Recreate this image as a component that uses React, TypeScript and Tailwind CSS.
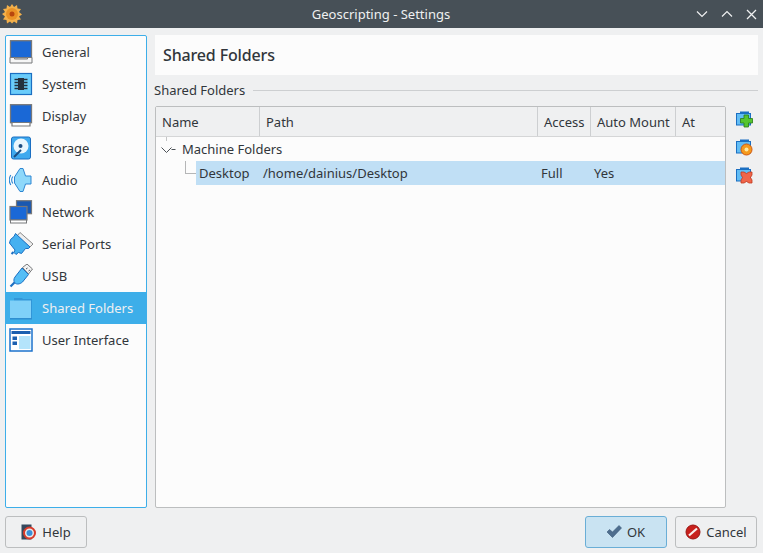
import type { ReactNode } from "react";

const GeneralIcon = () => (
  <svg width="24" height="24" viewBox="0 0 24 24">
    <rect x="1.5" y="0.7" width="21" height="17" fill="#1a68d6" stroke="#77787a" strokeWidth="1.3" />
    <path d="M1 17.5v5.500h22v-5.500h-4.500v1.500h-13v-1.500z" fill="#f6f6f6" stroke="#77787a" strokeWidth="1" />
  </svg>
);

const SystemIcon = () => (
  <svg width="24" height="24" viewBox="0 0 24 24">
    <rect x="1.5" y="1.5" width="21" height="21" fill="#6accfa" stroke="#1b6fc2" strokeWidth="1.2" />
    <rect x="9" y="6" width="6" height="12" fill="#24303c" />
    <path d="M5.500 7.500H9M5.500 10.500H9M5.500 13.500H9M5.500 16.500H9M15 7.500h3.500M15 10.500h3.500M15 13.500h3.500M15 16.500h3.500" stroke="#24303c" strokeWidth="1.4" />
  </svg>
);

const DisplayIcon = () => (
  <svg width="24" height="24" viewBox="0 0 24 24">
    <rect x="1.5" y="0.7" width="21" height="18" fill="#1a68d6" stroke="#77787a" strokeWidth="1.3" />
    <path d="M3 19v3h18v-3" fill="#fff" stroke="#77787a" strokeWidth="1.2" />
  </svg>
);

const StorageIcon = () => (
  <svg width="24" height="24" viewBox="0 0 24 24">
    <rect x="2.5" y="1" width="19" height="22" rx="2" fill="#3fa9ee" stroke="#1b6fc2" />
    <circle cx="12" cy="10" r="7.5" fill="#e9f6fd" />
    <circle cx="11.5" cy="10" r="2" fill="#1d4d82" />
    <path d="M5 21l7-7" stroke="#1d4d82" strokeWidth="2" />
  </svg>
);

const AudioIcon = () => (
  <svg width="24" height="24" viewBox="0 0 24 24">
    <path d="M5.500 9L11 0.500h3L16.500 8h5.500v8h-5.500L14 23.500h-3L5.500 15z" fill="#8ed8fa" stroke="#2e86d2" strokeWidth="1" />
    <path d="M3.800 8.500c-1.500 2.300-1.500 4.700 0 7M1.800 7c-2 3.300-2 6.700 0 10" fill="none" stroke="#2e86d2" strokeWidth="1.1" />
  </svg>
);

const NetworkIcon = () => (
  <svg width="24" height="24" viewBox="0 0 24 24">
    <rect x="7.500" y="0.700" width="15" height="13" fill="#1a58b0" stroke="#77787a" strokeWidth="1.2" />
    <rect x="1" y="6.500" width="17" height="13.500" fill="#1a68d6" stroke="#77787a" strokeWidth="1.2" />
    <rect x="1.500" y="20" width="16" height="3" fill="#fff" stroke="#77787a" />
  </svg>
);

const SerialIcon = () => (
  <svg width="24" height="24" viewBox="0 0 24 24">
    <path d="M11 0.500l13 11.500-3.500 3.500L8 4z" fill="#eeeeee" stroke="#8a8a8a" />
    <path d="M6.500 1.500L21 15l-1.500 1.500-3 0-4 5-3-1-2.500 2-2-2 1-2.500L0.500 11l1-3.500 3.500-3z" fill="#45b0f0" stroke="#1b6fc2" />
    <path d="M2.500 22l2-2" stroke="#1b6fc2" strokeWidth="2" />
  </svg>
);

const UsbIcon = () => (
  <svg width="24" height="24" viewBox="0 0 24 24">
    <path d="M13.500 3.500L18 0l5.500 5-4 5z" fill="#f2f2f2" stroke="#77787a" />
    <path d="M17 5l1.500-1M19.500 7l1.500-1" stroke="#55595d" strokeWidth="1" />
    <path d="M13 4l6.500 6.500-6 7.500c-3 2.500-6 2.500-7.500 1s-1.500-4 0-6z" fill="#55bef6" stroke="#1b6fc2" />
    <path d="M5.500 18.500L1.500 22.500" stroke="#1b6fc2" strokeWidth="2.2" />
  </svg>
);

const FolderIcon = () => (
  <svg width="24" height="24" viewBox="0 0 24 24">
    <path d="M5 2h8l1 1h9v20H5z" fill="#3296d8" />
    <rect x="1" y="4.500" width="21" height="18" fill="#7fd0f8" />
    <rect x="1" y="22" width="22" height="1.500" fill="#2f8ed0" />
  </svg>
);

const InterfaceIcon = () => (
  <svg width="24" height="24" viewBox="0 0 24 24">
    <rect x="1" y="1" width="22" height="22" fill="#ffffff" stroke="#1b72cc" strokeWidth="1.5" />
    <rect x="2.500" y="3" width="19" height="3" fill="#1b5fb0" />
    <rect x="10" y="8" width="11.500" height="13" fill="#b4e4fb" />
    <rect x="3.500" y="8.500" width="4.500" height="3.500" fill="#1b5fb0" />
    <rect x="3.500" y="13.500" width="4.500" height="3.500" fill="#1b5fb0" />
  </svg>
);

// folder with a small badge at the lower right, shared by the three side actions
const FolderAction = ({ children }: { children: ReactNode }) => (
  <svg width="17" height="17" viewBox="0 0 17 17">
    <path d="M4 0.500h9v3H4z" fill="#1b6fc2" />
    <rect x="0.500" y="2.500" width="14" height="11.500" fill="#62bdf4" stroke="#1b6fc2" />
    {children}
  </svg>
);

const sections = [
  { label: "General", icon: <GeneralIcon /> },
  { label: "System", icon: <SystemIcon /> },
  { label: "Display", icon: <DisplayIcon /> },
  { label: "Storage", icon: <StorageIcon /> },
  { label: "Audio", icon: <AudioIcon /> },
  { label: "Network", icon: <NetworkIcon /> },
  { label: "Serial Ports", icon: <SerialIcon /> },
  { label: "USB", icon: <UsbIcon /> },
  { label: "Shared Folders", icon: <FolderIcon />, active: true },
  { label: "User Interface", icon: <InterfaceIcon /> },
];

const columns = [
  { label: "Name", width: "w-[104px]" },
  { label: "Path", width: "w-[278px]" },
  { label: "Access", width: "w-[53px]" },
  { label: "Auto Mount", width: "w-[85px]" },
  { label: "At", width: "flex-1" },
];

export default function App() {
  return (
    <div className="flex h-[553px] w-[763px] flex-col overflow-hidden bg-[#eff0f1] text-[13px] text-[#31363b] [font-family:'Noto_Sans',sans-serif]">
      <header className="flex h-[28px] shrink-0 items-center bg-[#475057] pl-[2px] pr-[5px] text-[#eff0f1]">
        <svg width="20" height="20" viewBox="0 0 20 20">
          <path d="M10 0l2 3 3-2 .5 3.500 3.500.5-2 3 3 2.500-3 2 2 3-3.500.5-.5 3.500-3-2-2 2-2-2-3 2-.5-3.500L1 15.500l2-3-3-2.500 3-2-2-3 3.500-.5L5 1l3 2z" fill="#f4b04a" />
          <circle cx="10" cy="10" r="6" fill="#ea9226" />
          <circle cx="10" cy="10" r="2.500" fill="#b8460e" />
        </svg>
        <div className="flex-1 pl-[44px] pt-[2px] text-center">Geoscripting - Settings</div>
        <div className="flex items-center gap-[13px] pr-[1px]">
          <svg width="12" height="12" viewBox="0 0 12 12" fill="none" stroke="#eff0f1" strokeWidth="1.2"><path d="M1 3.500l5 5 5-5" /></svg>
          <svg width="12" height="12" viewBox="0 0 12 12" fill="none" stroke="#eff0f1" strokeWidth="1.2"><path d="M1 8.500l5-5 5 5" /></svg>
          <svg width="11" height="11" viewBox="0 0 11 11" fill="none" stroke="#eff0f1" strokeWidth="1.3"><path d="M1 1l9 9M10 1l-9 9" /></svg>
        </div>
      </header>

      <main className="flex min-h-0 flex-1 gap-[8px] px-[5px] pt-[7px]">
        <nav className="w-[142px] shrink-0 rounded-[2px] border border-[#3daee9] bg-[#fcfcfc]">
          {sections.map((s) => (
            <div key={s.label} className={`flex h-[32px] items-center gap-[9px] pl-[3px] ${s.active ? "bg-[#3daee9] text-[#eff0f1]" : ""}`}>
              <span className="flex h-[24px] w-[24px] items-center justify-center">{s.icon}</span>
              <span className="pt-[2px]">{s.label}</span>
            </div>
          ))}
        </nav>

        <section className="flex min-w-0 flex-1 flex-col">
          <h1 className="flex h-[40px] shrink-0 items-center bg-[#fcfcfc] pl-[8px] text-[16px] font-medium tracking-[-0.15px]">Shared Folders</h1>
          <div className="mt-[6px] flex h-[18px] shrink-0 items-center gap-[8px]">
            <span className="-ml-[1px] pt-[2px]">Shared Folders</span>
            <div className="h-px flex-1 bg-[#cdcfd1]" />
          </div>
          <div className="mt-[7px] flex min-h-0 flex-1 gap-[10px]">
            <div className="flex w-[571px] flex-col rounded-[2px] border border-[#bcbebf] bg-[#fcfcfc]">
              <div className="flex h-[30px] shrink-0 border-b border-[#d5d6d7] bg-[#eff0f1]">
                {columns.map((c, i) => (
                  <div key={c.label} className={`flex items-center pl-[6px] pt-[2px] ${c.width} ${i < columns.length - 1 ? "border-r border-[#cdcfd1]" : ""}`}>
                    {c.label}
                  </div>
                ))}
              </div>
              <div className="relative flex h-[24px] items-center pl-[26px] pt-[2px]">
                <span className="absolute left-[5px] top-[9px]">
                  <svg width="15" height="8" viewBox="0 0 15 8" fill="none" stroke="#4d5257" strokeWidth="1"><path d="M0.500 1.500l5 5 5-5M10.500 3.500h4" /></svg>
                </span>
                <span className="absolute left-[10px] top-0 h-[4px] w-px bg-[#c4c5c6]" />
                Machine Folders
              </div>
              <div className="relative flex h-[24px] items-center pl-[40px]">
                <span className="absolute left-[29px] top-0 h-[13px] w-[11px] border-b border-l border-[#b5b6b7]" />
                <div className="flex h-full flex-1 items-center bg-[#c0dff5] pl-[3px] pt-[2px]">
                  <span className="w-[64px]">Desktop</span>
                  <span className="w-[278px]">/home/dainius/Desktop</span>
                  <span className="w-[53px]">Full</span>
                  <span>Yes</span>
                </div>
              </div>
            </div>
            <div className="flex w-[17px] flex-col gap-[11px] pt-[5px]">
              <FolderAction>
                <path d="M8 4h4.500v3.500h4v4.500h-4v4h-4.500v-4h-3.500v-4.500h3.500z" fill="#55c52f" stroke="#2a7a18" strokeWidth="0.8" />
              </FolderAction>
              <FolderAction>
                <circle cx="10.500" cy="10.500" r="5.500" fill="#f59a1d" stroke="#d2570f" strokeWidth="1" />
                <circle cx="10.500" cy="10.500" r="2" fill="#ffe9a0" />
              </FolderAction>
              <FolderAction>
                <path d="M5 5l3 0 2.500 1.500L13 5l3 0 0 3-1.500 2.500L16 13l0 3-3 0-2.500-1.500L8 16l-3 0 0-3 1.500-2.500L5 8z" fill="#f0654a" stroke="#c03a20" strokeWidth="0.8" />
              </FolderAction>
            </div>
          </div>
        </section>
      </main>

      <footer className="flex h-[45px] shrink-0 items-start justify-between pl-[5px] pr-[6px] pt-[8px]">
        <button type="button" className="flex h-[32px] w-[82px] items-center justify-center gap-[5px] rounded-[3px] border border-[#bcbebf] bg-[#eff0f1]">
          <svg width="16" height="16" viewBox="0 0 16 16">
            <rect x="0.500" y="0.500" width="10" height="15" fill="#34495e" />
            <circle cx="8.500" cy="9" r="5.500" fill="#e8e8e8" stroke="#d83a2a" strokeWidth="2" />
            <circle cx="8.500" cy="9" r="3" fill="#3a8fd8" />
          </svg>
          <span className="pt-[2px]">Help</span>
        </button>
        <div className="flex gap-[8px]">
          <button type="button" className="flex h-[32px] w-[82px] items-center justify-center gap-[5px] rounded-[3px] border border-[#6aaed6] bg-[#c9e3f2]">
            <svg width="16" height="16" viewBox="0 0 16 16"><path d="M1 8l2.500-2.500L6.500 8 13 1.500l2.500 2.500-9 9.500z" fill="#4e6e8e" stroke="#3a5878" strokeWidth="0.6" /></svg>
            <span className="pr-[1px] pt-[2px]">OK</span>
          </button>
          <button type="button" className="flex h-[32px] w-[82px] items-center justify-center gap-[5px] rounded-[3px] border border-[#bcbebf] bg-[#eff0f1]">
            <svg width="16" height="16" viewBox="0 0 16 16"><circle cx="8" cy="8" r="7" fill="#c8201c" stroke="#9a1512" /><path d="M4 11.500L12 4.500" stroke="#f8f0ee" strokeWidth="2.2" /></svg>
            <span className="pt-[2px]">Cancel</span>
          </button>
        </div>
      </footer>
    </div>
  );
}
